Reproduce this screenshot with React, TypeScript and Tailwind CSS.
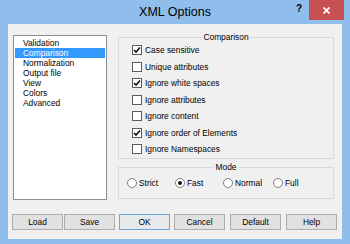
import React from "react";

const font = { fontFamily: '"Liberation Sans", Arial, sans-serif' };

function Check({ checked, label }: { checked: boolean; label: string }) {
  return (
    <div className="h-[16.5px] flex items-center">
      <div className="w-[10px] h-[10px] border border-[#5c5c5c] bg-white flex items-center justify-center">
        {checked && (
          <svg width="8" height="8" viewBox="0 0 8 8">
            <path d="M1 4 L3 6 L7 1.5" fill="none" stroke="#111" strokeWidth="1.6" />
          </svg>
        )}
      </div>
      <span className="ml-[3px] text-[8.4px] leading-[10px] text-black">{label}</span>
    </div>
  );
}

function Radio({ checked, label, w }: { checked: boolean; label: string; w: string }) {
  return (
    <div className={`flex items-center ${w}`}>
      <div className="w-[10px] h-[10px] rounded-full border border-[#808080] bg-white flex items-center justify-center">
        {checked && <div className="w-[4px] h-[4px] rounded-full bg-[#111]" />}
      </div>
      <span className="ml-[2px] text-[8.4px] leading-[10px] text-black">{label}</span>
    </div>
  );
}

function Btn({ label, cls, def }: { label: string; cls: string; def?: boolean }) {
  return (
    <div
      className={`w-[51px] h-[16px] flex items-center justify-center text-[8.4px] text-black border ${
        def ? "border-[#6aa6e0] bg-[#e6e9ec]" : "border-[#adadad] bg-[#e1e1e1]"
      } ${cls}`}
    >
      {label}
    </div>
  );
}

export default function App() {
  const items = ["Validation", "Comparison", "Normalization", "Output file", "View", "Colors", "Advanced"];
  return (
    <div className="w-[350px] h-[244px] bg-[#8fbdec] flex flex-col" style={font}>
      <div className="h-[24px] relative flex items-center justify-center">
        <span className="text-[12.5px] text-black leading-none">XML Options</span>
        <span className="absolute left-[296px] top-[3px] text-[10px] font-bold text-black leading-[12px]">?</span>
        <div className="absolute left-[309px] top-0 w-[35px] h-[20px] bg-[#c75050] flex items-center justify-center">
          <svg width="7" height="7" viewBox="0 0 7 7">
            <path d="M0.5 0.5 L6.5 6.5 M6.5 0.5 L0.5 6.5" stroke="white" strokeWidth="1.7" />
          </svg>
        </div>
      </div>
      <div className="ml-[8px] w-[334px] h-[215px] bg-[#f0f0f0] flex flex-col">
        <div className="flex mt-[11px]">
          <div className="ml-[5px] w-[94px] h-[165px] border border-[#8a8f96] bg-white pt-[2px] pl-[1px] pr-[1px] flex flex-col">
            {items.map((it) => (
              <div
                key={it}
                className={`h-[10px] flex items-center pl-[8px] text-[8.4px] leading-[10px] ${
                  it === "Comparison" ? "bg-[#3399ff] text-white" : "text-black"
                }`}
              >
                {it}
              </div>
            ))}
          </div>
          <div className="ml-[11px] mt-[2px] w-[216px] flex flex-col gap-[8px]">
            <div className="relative h-[122px] border border-[#d9d9d9] pt-[4px] pl-[13px]">
              <span className="absolute top-[-6px] left-1/2 -translate-x-1/2 px-[2px] bg-[#f0f0f0] text-[8.4px] leading-[11px] text-black">
                Comparison
              </span>
              <Check checked label="Case sensitive" />
              <Check checked={false} label="Unique attributes" />
              <Check checked label="Ignore white spaces" />
              <Check checked={false} label="Ignore attributes" />
              <Check checked={false} label="Ignore content" />
              <Check checked label="Ignore order of Elements" />
              <Check checked={false} label="Ignore Namespaces" />
            </div>
            <div className="relative h-[32px] border border-[#d9d9d9] pl-[8px] flex items-center">
              <span className="absolute top-[-6px] left-1/2 -translate-x-1/2 px-[2px] bg-[#f0f0f0] text-[8.4px] leading-[11px] text-black">
                Mode
              </span>
              <Radio checked={false} label="Strict" w="w-[48px]" />
              <Radio checked label="Fast" w="w-[48px]" />
              <Radio checked={false} label="Normal" w="w-[50px]" />
              <Radio checked={false} label="Full" w="w-[48px]" />
            </div>
          </div>
        </div>
        <div className="flex mt-[14px]">
          <Btn label="Load" cls="ml-[4px]" />
          <Btn label="Save" cls="ml-[1px]" />
          <Btn label="OK" cls="ml-[4px]" def />
          <Btn label="Cancel" cls="ml-[4px]" />
          <Btn label="Default" cls="ml-[5px]" />
          <Btn label="Help" cls="ml-[5px]" />
        </div>
      </div>
    </div>
  );
}
